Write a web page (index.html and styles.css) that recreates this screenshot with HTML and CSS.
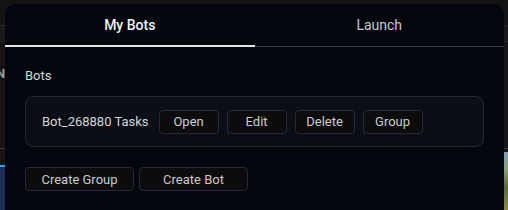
FILE: index.html
```html
<!DOCTYPE html>
<html>
<head>
<meta charset="utf-8">
<link rel="stylesheet" href="styles.css">
</head>
<body>
<div class="page">
  <div class="topbar"></div>
  <div class="subbar"></div>
  <div class="main">
    <div class="mark">N</div>
    <div class="rule"></div>
    <div class="hero">
      <div class="hero-left"></div>
      <div class="hero-right"></div>
    </div>
  </div>
</div>
<div class="modal">
  <div class="tabs">
    <div class="tab active">My Bots</div>
    <div class="tab">Launch</div>
  </div>
  <div class="content">
    <div class="section-title">Bots</div>
    <div class="card">
      <span class="bot-name">Bot_268880 Tasks</span>
      <button class="btn">Open</button>
      <button class="btn">Edit</button>
      <button class="btn">Delete</button>
      <button class="btn">Group</button>
    </div>
    <div class="actions">
      <button class="btn wide">Create Group</button>
      <button class="btn wide">Create Bot</button>
    </div>
  </div>
</div>
</body>
</html>
```
FILE: styles.css
```css
* { box-sizing: border-box; }
html, body { margin: 0; padding: 0; }
body {
  width: 508px;
  height: 210px;
  overflow: hidden;
  background: #121212;
  font-family: Roboto, "Liberation Sans", sans-serif;
  position: relative;
}
.page { display: flex; flex-direction: column; height: 210px; }
.topbar { height: 26px; background: #131313; border-bottom: 1px solid #2a2a2a; }
.subbar { height: 16px; background: #1a1919; border-bottom: 1px solid #242424; }
.main { flex: 1; display: flex; flex-direction: column; background: #161414; }
.mark {
  color: #9a9a9a; font-weight: 700; font-size: 13px;
  margin: 24px 0 0 -4px; line-height: 16px;
}
.rule { height: 1px; background: #3a3a3a; margin-top: 66px; }
.hero { flex: 1; display: flex; justify-content: space-between; margin-top: 3px; }
.hero-left { width: 6px; background: #1d2d55; border-top: 2px solid #3aa0e8; margin-top: 13px; }
.hero-right { width: 6px; background: linear-gradient(#7f9fc0 0, #8aa070 30%, #5d6a3a 60%, #8a8a40 100%); }

.modal {
  position: absolute;
  left: 5px;
  top: 4px;
  width: 499px;
  bottom: 0;
  background: #03060d;
  border-radius: 10px 10px 0 0;
}
.tabs { display: flex; border-bottom: 1px solid #3b3e45; }
.tab {
  flex: 1;
  height: 42px;
  display: flex; align-items: center; justify-content: center;
  font-size: 14px;
  color: #c9c9cc;
}
.tab.active {
  color: #f2f2f2;
  font-weight: 500;
  border-bottom: 2px solid #e4e4e4;
  margin-bottom: -1px;
  height: 43px;
}
.content { padding: 21px 20px 0 20px; }
.section-title { font-size: 13px; line-height: 16px; color: #d8d8d8; }
.card {
  margin-top: 12px;
  display: flex; align-items: center; gap: 8px;
  background: #0b0e16;
  border: 1px solid #232733;
  border-radius: 8px;
  padding: 12px 16px;
  height: 51px;
}
.bot-name { font-size: 13px; color: #d4d4d6; margin-right: 2px; }
.btn {
  font-family: inherit;
  font-size: 13px;
  color: #cacacd;
  background: #0c0c0e;
  border: 1px solid #262a36;
  border-radius: 4px;
  height: 24px;
  min-width: 60px;
  padding: 0 10px;
}
.actions { display: flex; gap: 5px; margin-top: 20px; }
.btn.wide { width: 109px; }
```
